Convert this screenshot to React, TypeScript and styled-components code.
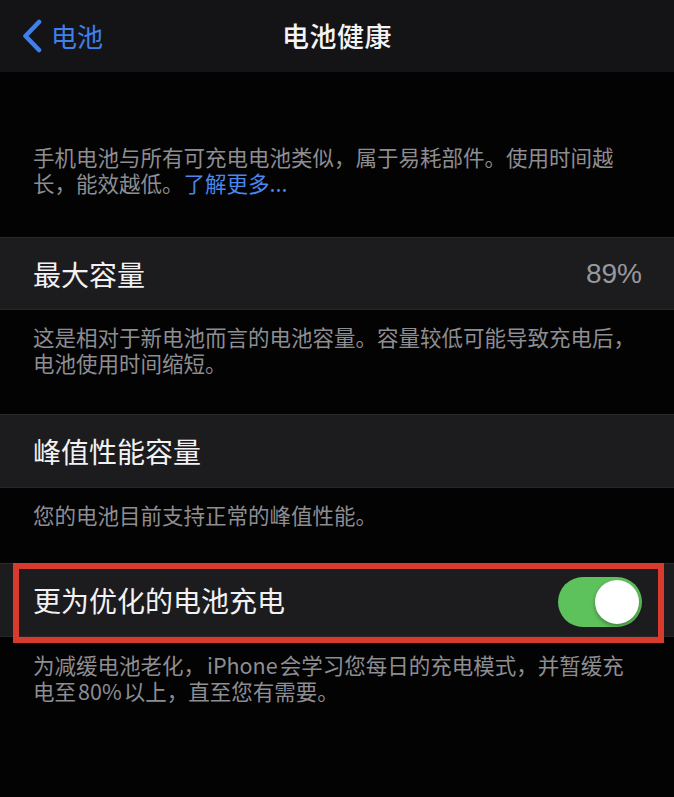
import React from "react";
import styled, { createGlobalStyle } from "styled-components";

const Global = createGlobalStyle`
  html, body { margin: 0; padding: 0; background: #030303; }
  body {
    width: 674px;
    height: 797px;
    overflow: hidden;
    font-family: "Noto Sans CJK SC", "Noto Sans", sans-serif;
    -webkit-font-smoothing: antialiased;
  }
`;

const Page = styled.div`
  width: 674px;
  min-height: 797px;
  background: #030303;
  display: flex;
  flex-direction: column;
`;

const NavBar = styled.header`
  height: 72px;
  background: #141416;
  display: grid;
  grid-template-columns: 1fr auto 1fr;
  align-items: center;
  padding: 0 21px;
  box-sizing: border-box;
`;

const BackButton = styled.div`
  display: flex;
  align-items: center;
  gap: 8px;
  color: #3f80ea;
  font-size: 26px;
  line-height: 34px;
`;

const Title = styled.h1`
  margin: 0;
  color: #f4f4f6;
  font-size: 27px;
  font-weight: 500;
  line-height: 34px;
  letter-spacing: 0.5px;
`;

const Note = styled.div<{ $top: number; $bottom: number }>`
  margin: 0;
  padding: ${(p) => p.$top}px 20px ${(p) => p.$bottom}px 33px;
  color: #8d8d92;
  font-size: 21.5px;
`;

const NoteLine = styled.span`
  display: block;
  height: 26px;
  line-height: 26px;
  white-space: nowrap;
`;

const Latin = styled.span`
  margin: 0 2px;
`;

const Link = styled.span`
  color: #4a86ec;
`;

const Row = styled.div<{ $height: number }>`
  position: relative;
  height: ${(p) => p.$height}px;
  box-sizing: border-box;
  background: #1c1c1e;
  border-top: 1px solid #2a2a2c;
  border-bottom: 1px solid #262628;
  display: flex;
  align-items: center;
  justify-content: space-between;
  padding: 0 32px 0 33px;
`;

const RowLabel = styled.span`
  color: #f2f2f4;
  font-size: 28px;
  line-height: 36px;
`;

const RowValue = styled.span`
  color: #98989d;
  font-family: "Liberation Sans", Arial, sans-serif;
  font-size: 28px;
  line-height: 36px;
`;

const Toggle = styled.div`
  position: relative;
  width: 84px;
  height: 50px;
  border-radius: 25px;
  background: #5ec25c;
  margin-top: 4px;
`;

const Knob = styled.div`
  position: absolute;
  top: 3px;
  right: 3px;
  width: 44px;
  height: 44px;
  border-radius: 50%;
  background: #ffffff;
  box-shadow: 0 2px 4px rgba(0, 0, 0, 0.35);
`;

const Highlight = styled.div`
  position: absolute;
  top: -1px;
  left: 13px;
  right: 10px;
  bottom: -7px;
  border: 6px solid #d93a2e;
  pointer-events: none;
`;

const Chevron = () => (
  <svg width="22" height="34" viewBox="0 0 22 34" aria-hidden>
    <path
      d="M18 3 L4.5 17 L18 31"
      fill="none"
      stroke="#3f80ea"
      strokeWidth="4.6"
      strokeLinecap="round"
      strokeLinejoin="round"
    />
  </svg>
);

export default function App() {
  return (
    <Page>
      <Global />
      <NavBar>
        <BackButton>
          <Chevron />
          <span>电池</span>
        </BackButton>
        <Title>电池健康</Title>
        <div />
      </NavBar>

      <Note $top={72} $bottom={41}>
        <NoteLine>手机电池与所有可充电电池类似，属于易耗部件。使用时间越</NoteLine>
        <NoteLine>
          长，能效越低。<Link>了解更多...</Link>
        </NoteLine>
      </Note>

      <Row $height={73}>
        <RowLabel>最大容量</RowLabel>
        <RowValue>89%</RowValue>
      </Row>

      <Note $top={14} $bottom={38}>
        <NoteLine>这是相对于新电池而言的电池容量。容量较低可能导致充电后，</NoteLine>
        <NoteLine>电池使用时间缩短。</NoteLine>
      </Note>

      <Row $height={74}>
        <RowLabel>峰值性能容量</RowLabel>
      </Row>

      <Note $top={14} $bottom={35}>
        <NoteLine>您的电池目前支持正常的峰值性能。</NoteLine>
      </Note>

      <Row $height={74}>
        <RowLabel>更为优化的电池充电</RowLabel>
        <Toggle>
          <Knob />
        </Toggle>
        <Highlight />
      </Row>

      <Note $top={15} $bottom={20}>
        <NoteLine>
          为减缓电池老化，<Latin>iPhone</Latin>会学习您每日的充电模式，并暂缓充
        </NoteLine>
        <NoteLine>
          电至<Latin>80%</Latin>以上，直至您有需要。
        </NoteLine>
      </Note>
    </Page>
  );
}
